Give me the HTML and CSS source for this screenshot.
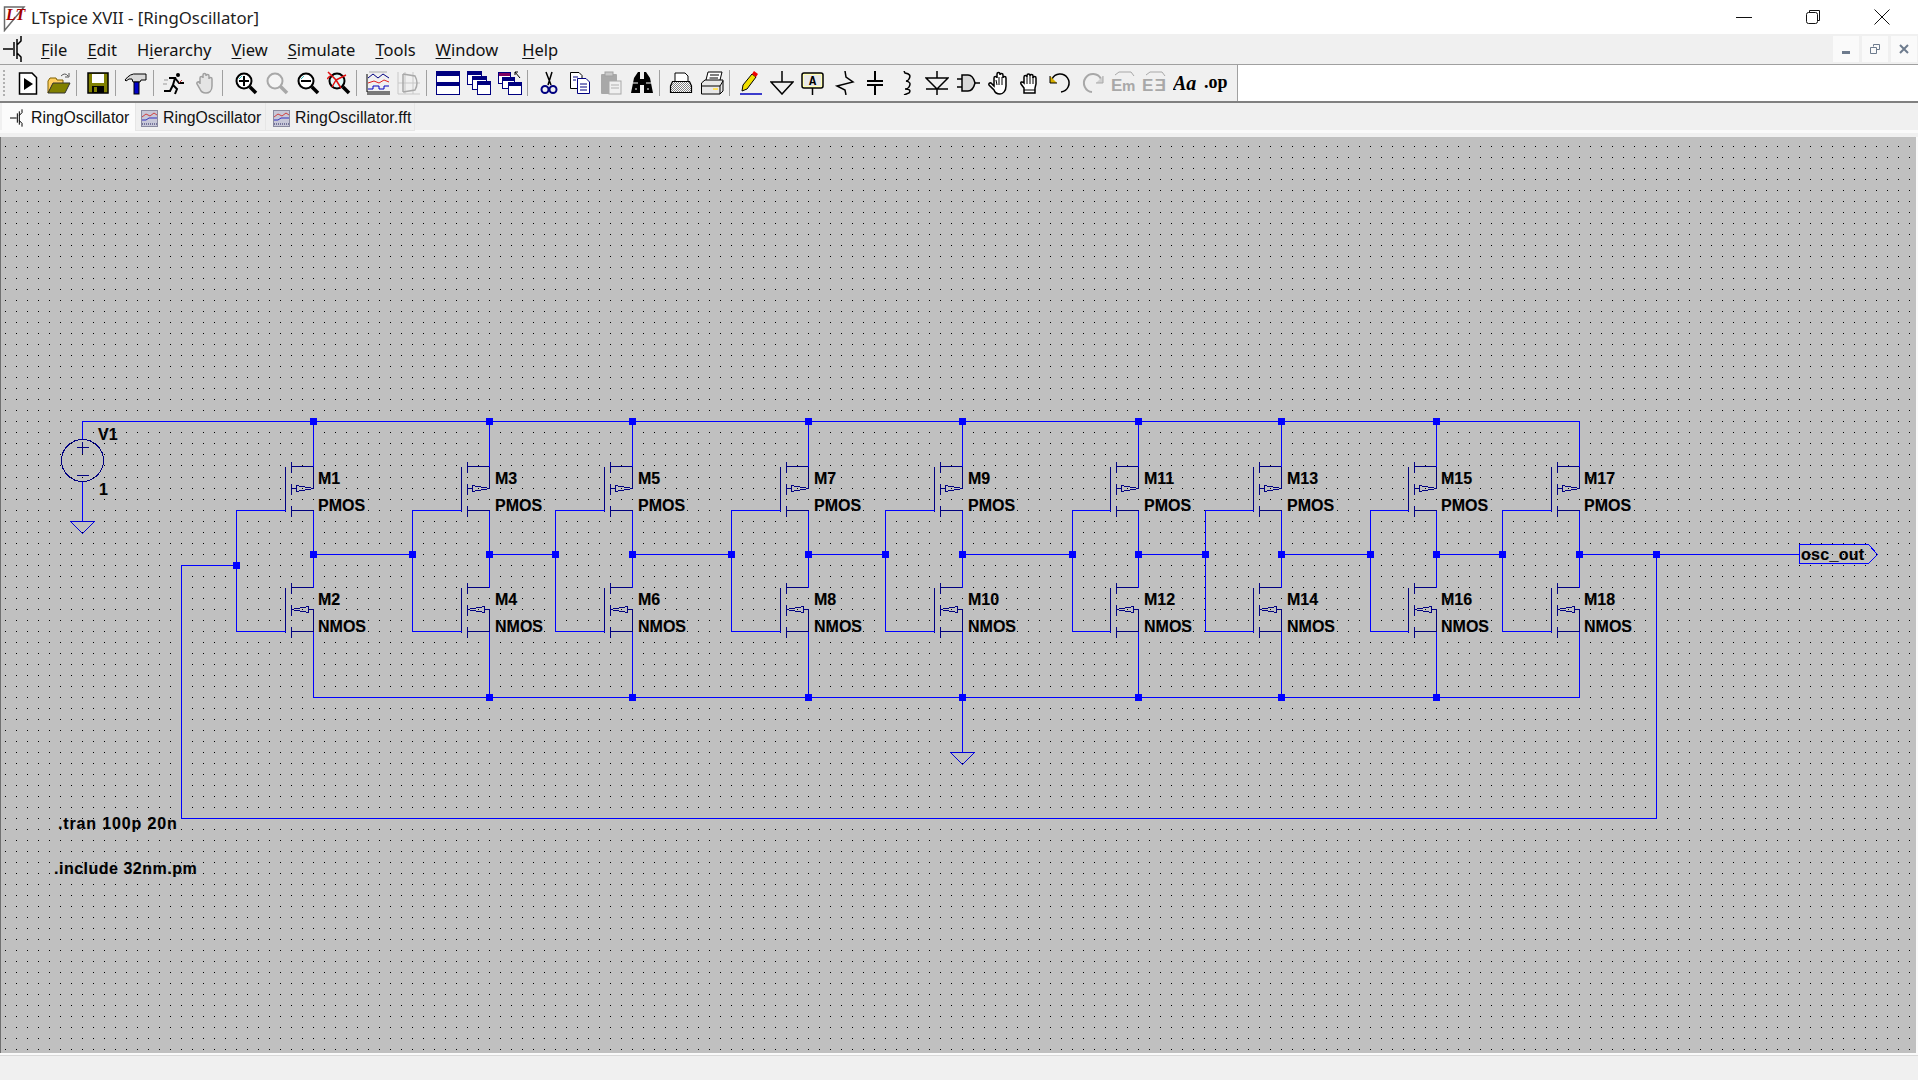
FILE: index.html
```html
<!DOCTYPE html>
<html lang="en">
<head>
    <meta charset="UTF-8">
    <title>LTspice XVII - [RingOscillator]</title>
    <link rel="stylesheet" href="styles.css">
</head>
<body>
    <svg class="defs" width="0" height="0">
        <defs>
            <g id="fet-mark">
                <path d="M0 13H10M11 6V20M14 3V23M14 9L18 5V0M14 17L18 21V26" fill="none" stroke="#000" stroke-width="1.5"/>
            </g>
            <g id="plot-mini">
                <rect x="0.5" y="0.5" width="16" height="16" fill="#c8c8d8" stroke="#8a8aa0"/>
                <path d="M1 7L5 4L9 6L13 3L16 5" fill="none" stroke="#d04040"/>
                <path d="M1 10H5L8 8H16" fill="none" stroke="#3030c0"/>
                <path d="M1 14H16" stroke="#202060" stroke-dasharray="1 1"/>
            </g>
            <g id="lens">
                <path d="M15 15L22 22" stroke="#000" stroke-width="3.5"/>
                <path d="M14 14L16 16" stroke="#808080" stroke-width="2"/>
            </g>
            <pattern id="dither" width="2" height="2" patternUnits="userSpaceOnUse">
                <rect width="2" height="2" fill="#fff"/>
                <rect width="1" height="1" fill="#808080"/>
                <rect x="1" y="1" width="1" height="1" fill="#808080"/>
            </pattern>
        </defs>
    </svg>

    <header class="titlebar">
        <svg class="logo" width="24" height="30" viewBox="0 0 24 30">
            <path d="M2.5 5V28.5L22 5Z" fill="#fff" stroke="#6a6a6a" stroke-width="1.5"/>
            <text x="4" y="18" class="logo-text">LT</text>
        </svg>
        <span class="title">LTspice XVII - [RingOscillator]</span>
        <div class="winbtns">
            <span class="winbtn"><svg width="16" height="16"><path d="M0 8.5H16" stroke="#111"/></svg></span>
            <span class="winbtn"><svg width="16" height="16"><path d="M4.5 3V1.5H14.5V11.5H13" fill="none" stroke="#111"/><rect x="1.5" y="3.5" width="11" height="11" rx="2" fill="#fff" stroke="#111"/></svg></span>
            <span class="winbtn"><svg width="16" height="16"><path d="M0.5 0.5L15.5 15.5M15.5 0.5L0.5 15.5" stroke="#111"/></svg></span>
        </div>
    </header>

    <nav class="menubar">
        <svg class="menu-icon" width="20" height="26" viewBox="0 0 20 26"><use href="#fet-mark"/></svg>
        <a class="menu-item"><u>F</u>ile</a>
        <a class="menu-item"><u>E</u>dit</a>
        <a class="menu-item">H<u>i</u>erarchy</a>
        <a class="menu-item"><u>V</u>iew</a>
        <a class="menu-item"><u>S</u>imulate</a>
        <a class="menu-item"><u>T</u>ools</a>
        <a class="menu-item"><u>W</u>indow</a>
        <a class="menu-item help"><u>H</u>elp</a>
        <div class="mdibtns">
            <span class="mdibtn"><svg width="10" height="10"><rect x="1" y="7" width="8" height="3" fill="#6d7b8d"/></svg></span>
            <span class="mdibtn"><svg width="10" height="10"><path d="M3.5 2.5V0.5H9.5V5.5H7M0.5 3.5H6.5V9.5H0.5Z" fill="none" stroke="#6d7b8d"/></svg></span>
            <span class="mdibtn"><svg width="10" height="10"><path d="M1 1L9 9M9 1L1 9" stroke="#6d7b8d" stroke-width="2"/></svg></span>
        </div>
    </nav>

    <div class="toolrow">
        <div class="toolbar">
            <span class="grip"></span>
            <span class="tool"><svg viewBox="0 0 24 24"><path d="M3.5 2H16L20.5 6.5V23H3.5Z" fill="#fff" stroke="#000" stroke-width="1.5"/><path d="M8 7L17 13L8 19Z"/></svg></span>
            <span class="tool"><svg viewBox="0 0 24 24"><path d="M1 10L3 7H9L10 9H16V13H6L1 22Z" fill="#ffd060" stroke="#806000"/><path d="M1 22L6 12H23L18 22Z" fill="#808000" stroke="#333"/><path d="M14 5Q18 1 21 5M22 2V6H18" fill="none" stroke="#555"/></svg></span>
            <i class="sep"></i>
            <span class="tool"><svg viewBox="0 0 24 24"><rect x="2" y="2" width="20" height="20" fill="#808000" stroke="#000" stroke-width="1.5"/><rect x="6" y="3" width="12" height="9" fill="#fff"/><rect x="6" y="15" width="12" height="7"/><rect x="8" y="16" width="3" height="5" fill="#808000"/></svg></span>
            <i class="sep tight"></i>
            <span class="tool"><svg viewBox="0 0 24 24"><path d="M1 9Q6 2 13 3H22V9H17L16 11H9L8 8Q5 7 2 10Z" fill="#d8d8d8" stroke="#000"/><rect x="10" y="11" width="5" height="12" fill="#0000c8" stroke="#000"/></svg></span>
            <i class="sep tight"></i>
            <span class="tool"><svg viewBox="0 0 24 24"><path d="M2 20H8L11 14L15 18L13 23M11 14L13 7L7 7M13 7L17 12H22" fill="none" stroke="#000" stroke-width="2"/><circle cx="16" cy="4" r="2"/><path d="M2 9H6M1 13H5" stroke="#999"/><path d="M17 12L20 9" stroke="#c03030"/></svg></span>
            <span class="tool"><svg viewBox="0 0 24 24"><path d="M7 13V7a1.5 1.5 0 0 1 3 0V4a1.5 1.5 0 0 1 3 0V5a1.5 1.5 0 0 1 3 0v3a1.5 1.5 0 0 1 3 0v7c0 5-3 7-6 7s-5-1-6-4l-3-5c-1-2 2-3 3-1z" fill="#e4e4e4" stroke="#a0a0a0" stroke-width="1.5"/></svg></span>
            <i class="sep loose"></i>
            <span class="tool"><svg viewBox="0 0 24 24"><use href="#lens"/><circle cx="10" cy="10" r="7.5" fill="#fff" stroke="#000" stroke-width="2"/><path d="M10 5V15M5 10H15" stroke="#000" stroke-width="2"/><path d="M5 8L8 5" stroke="#30c0c0"/></svg></span>
            <span class="tool"><svg viewBox="0 0 24 24"><path d="M15 15L22 22" stroke="#a8a8a8" stroke-width="3.5"/><circle cx="10" cy="10" r="7.5" fill="#f4f4f4" stroke="#a8a8a8" stroke-width="2"/></svg></span>
            <span class="tool"><svg viewBox="0 0 24 24"><use href="#lens"/><circle cx="10" cy="10" r="7.5" fill="#fff" stroke="#000" stroke-width="2"/><path d="M5 10H15" stroke="#000" stroke-width="2"/><path d="M5 8L8 5" stroke="#30c0c0"/></svg></span>
            <span class="tool"><svg viewBox="0 0 24 24"><use href="#lens"/><circle cx="10" cy="10" r="7.5" fill="#e0f8f8" stroke="#000" stroke-width="2"/><path d="M1 1L9 9L5 16M9 9L19 4M9 9L14 17M3 5L0 8" fill="none" stroke="#e01010" stroke-width="1.5"/></svg></span>
            <i class="sep"></i>
            <span class="tool"><svg viewBox="0 0 24 24"><path d="M1 3V21H24M1 23H24" fill="none" stroke="#000"/><path d="M3 1H21" stroke="#aaa"/><path d="M2 7L7 3L12 7L17 3L23 7" fill="none" stroke="#000080"/><path d="M2 12L8 10L13 12L18 9L23 11" fill="none" stroke="#e02020"/><path d="M2 18H7V15H13V18H18V15H23" fill="none" stroke="#0000c0"/></svg></span>
            <span class="tool"><svg viewBox="0 0 24 24"><path d="M1 1V23H23M1 12H23M8 1V23M16 1V23" fill="none" stroke="#c8c8c8"/><path d="M6 3V21M6 3L18 5Q22 12 18 19L6 21" fill="none" stroke="#a8a8a8" stroke-width="1.5"/></svg></span>
            <i class="sep"></i>
            <span class="tool"><svg viewBox="0 0 24 24"><rect x="0.5" y="0.5" width="23" height="23" fill="#fff" stroke="#000080"/><rect x="1" y="1" width="22" height="4" fill="#000080"/><rect x="1" y="11" width="22" height="4" fill="#000080"/></svg></span>
            <span class="tool"><svg viewBox="0 0 24 24"><rect x="0.5" y="0.5" width="14" height="13" fill="#fff" stroke="#000080"/><rect x="1" y="1" width="13" height="3" fill="#000080"/><rect x="5.5" y="5.5" width="14" height="13" fill="#fff" stroke="#000080"/><rect x="6" y="6" width="13" height="3" fill="#000080"/><rect x="10.5" y="10.5" width="13" height="13" fill="#fff" stroke="#000080"/><rect x="11" y="11" width="12" height="3" fill="#000080"/></svg></span>
            <span class="tool"><svg viewBox="0 0 24 24"><rect x="0.5" y="1.5" width="12" height="11" fill="#fff" stroke="#000080"/><rect x="1" y="2" width="11" height="3" fill="#800060"/><rect x="4.5" y="6.5" width="12" height="11" fill="#fff" stroke="#000080"/><rect x="5" y="7" width="11" height="3" fill="#000080"/><rect x="10.5" y="11.5" width="13" height="12" fill="#fff" stroke="#000080"/><rect x="11" y="12" width="12" height="3" fill="#000080"/><path d="M20 1L17 1L17 4M17 1L22 7" fill="none" stroke="#000"/></svg></span>
            <i class="sep"></i>
            <span class="tool"><svg viewBox="0 0 24 24"><path d="M9 1L14 14M15 1L11 14" stroke="#000" stroke-width="1.5"/><circle cx="8" cy="18.5" r="3.5" fill="none" stroke="#000080" stroke-width="2"/><circle cx="16" cy="18.5" r="3.5" fill="none" stroke="#000080" stroke-width="2"/></svg></span>
            <span class="tool"><svg viewBox="0 0 24 24"><path d="M2.5 1.5H11L14 4.5V17.5H2.5Z" fill="#fff" stroke="#000"/><path d="M9.5 7.5H18L21.5 11V22.5H9.5Z" fill="#fff" stroke="#000080"/><path d="M5 6H10M5 9H8M12 13H19M12 16H19M12 19H19" stroke="#000080"/></svg></span>
            <span class="tool"><svg viewBox="0 0 24 24"><rect x="2" y="3" width="16" height="20" rx="1" fill="#a8a8a8"/><rect x="6" y="1" width="8" height="4" fill="#c8c8c8" stroke="#a0a0a0"/><rect x="10" y="10" width="12" height="13" fill="#f0f0f0" stroke="#a8a8a8"/><path d="M12 14H20M12 17H20" stroke="#b0b0b0"/></svg></span>
            <span class="tool"><svg viewBox="0 0 24 24"><path d="M4 7L8 1H10V8H14V1H16L20 7L23 22H14V14H10V22H1Z"/><path d="M3 12H8M16 12H21M5 18H7M17 18H19" stroke="#fff"/></svg></span>
            <i class="sep"></i>
            <span class="tool"><svg viewBox="0 0 24 24"><path d="M6 11V2H16L19 5V11" fill="#fff" stroke="#000"/><path d="M3.5 10.5H20.5L22.5 15V21.5H1.5V15Z" fill="url(#dither)" stroke="#000" stroke-width="1.2"/></svg></span>
            <span class="tool"><svg viewBox="0 0 24 24"><path d="M6 9L8 1H22L20 9" fill="#fff" stroke="#000"/><path d="M10 4H19M9.5 7H18" stroke="#000"/><path d="M1.5 12L5 9H23V20L20 23H1.5Z" fill="#e8e8e8" stroke="#000"/><path d="M2 15H20V23M20 15L23 10" fill="none" stroke="#000"/><rect x="13" y="17" width="5" height="2" fill="#ffe060"/></svg></span>
            <i class="sep"></i>
            <span class="tool"><svg viewBox="0 0 24 24"><path d="M1 23H23" stroke="#0000c0" stroke-width="1.5"/><path d="M3 20L4 14L13 3L17 6L8 18Z" fill="#f0e000" stroke="#000"/><path d="M13 3L15 0L19 3L17 6Z" fill="#f00000"/></svg></span>
            <span class="tool"><svg viewBox="0 0 24 24"><path d="M12 0V11M1 11H23L12 23Z" fill="none" stroke="#000" stroke-width="1.5"/></svg></span>
            <span class="tool"><svg viewBox="0 0 24 24"><rect x="1" y="2" width="21" height="15" rx="2" fill="#ffffb0" stroke="#000" stroke-width="1.5"/><rect x="3" y="4" width="17" height="11" fill="#e8e8e8"/><text x="11.5" y="14" class="tool-letter">A</text><path d="M11.5 17V24" stroke="#000" stroke-width="1.5"/></svg></span>
            <span class="tool"><svg viewBox="0 0 24 24"><path d="M13 0L14 6L21 11L5 15L13 19L14 24" fill="none" stroke="#000" stroke-width="1.5"/></svg></span>
            <span class="tool"><svg viewBox="0 0 24 24"><path d="M12 0V10M4 10H20M4 14H20M12 14V24" fill="none" stroke="#000" stroke-width="2"/></svg></span>
            <span class="tool"><svg viewBox="0 0 24 24"><path d="M10 0L11 2Q18 3 15 8Q14 10 12 10Q18 11 15 16Q14 18 11 18Q18 18 15 22L10 24" fill="none" stroke="#000" stroke-width="1.5"/></svg></span>
            <span class="tool"><svg viewBox="0 0 24 24"><path d="M12 0V7M1 7H23L12 18ZM1 18H23M12 18V24" fill="none" stroke="#000" stroke-width="1.5"/></svg></span>
            <span class="tool"><svg viewBox="0 0 24 24"><path d="M1 8H6M1 16H6M18 12H24" stroke="#000" stroke-width="1.5"/><path d="M6 4H12Q17 4 19 12Q17 20 12 20H6Z" fill="#d8d8d8" stroke="#000" stroke-width="1.5"/></svg></span>
            <span class="tool"><svg viewBox="0 0 24 24"><path d="M7 15V7a1.5 1.5 0 0 1 3 0V3a1.5 1.5 0 0 1 3 0V4a1.5 1.5 0 0 1 3 0v3a1.5 1.5 0 0 1 3 0v8c0 5-3 8-6 8s-5-1-6-4l-5-5c-1-2 2-3 3-1z" fill="#fff" stroke="#000" stroke-width="1.5"/><path d="M9 9L10 14M12 6V14M15 6V14" stroke="#000"/></svg></span>
            <span class="tool"><svg viewBox="0 0 24 24"><path d="M6 22V17L3 13c-1-2 1-3 3-1V6a1.5 1.5 0 0 1 3 0V4.5a1.5 1.5 0 0 1 3 0V5a1.5 1.5 0 0 1 3 0V7a1.5 1.5 0 0 1 3 0v6l-1 4v5z" fill="#fff" stroke="#000" stroke-width="1.5"/><path d="M9 6V13M12 5V13M15 6V13M6 19H17" stroke="#000"/></svg></span>
            <span class="tool"><svg viewBox="0 0 24 24"><path d="M3 8A9 9 0 1 1 12 21" fill="none" stroke="#000" stroke-width="1.5"/><path d="M1 5V12H8" fill="#d8b000" stroke="#000"/></svg></span>
            <span class="tool"><svg viewBox="0 0 24 24"><path d="M21 8A9 9 0 1 0 12 21" fill="none" stroke="#a8a8a8" stroke-width="2"/><path d="M23 5V12H16" fill="#d0d0d0" stroke="#a8a8a8"/></svg></span>
            <span class="tool"><svg viewBox="0 0 24 24"><text x="0" y="20" class="tool-gray">E</text><text x="11" y="20" class="tool-gray small">m</text><path d="M4 4L8 1H20L23 5" fill="none" stroke="#a8a8a8"/></svg></span>
            <span class="tool"><svg viewBox="0 0 24 24"><text x="0" y="20" class="tool-gray">E</text><text x="-24" y="20" transform="scale(-1 1)" class="tool-gray">E</text><path d="M4 4L8 1H20L23 5" fill="none" stroke="#a8a8a8"/></svg></span>
            <span class="tool"><svg viewBox="0 0 24 24"><text x="0" y="19" class="tool-aa">Aa</text></svg></span>
            <span class="tool"><svg viewBox="0 0 24 24"><text x="0" y="17" class="tool-op">.op</text></svg></span>
        </div>
        <div class="toolrest"></div>
    </div>

    <div class="tabs">
        <div class="tab active"><svg width="16" height="18" viewBox="0 0 24 26"><use href="#fet-mark" x="3"/></svg>RingOscillator</div>
        <div class="tab second"><svg width="17" height="17"><use href="#plot-mini"/></svg>RingOscillator</div>
        <div class="tab third"><svg width="17" height="17"><use href="#plot-mini"/></svg>RingOscillator.fft</div>
    </div>

    <main class="sheet">
        <svg class="schematic" width="1915" height="916" viewBox="1 137 1915 916">
            <defs>
                <g id="cell">
                    <path class="sym" d="M-28 466V511M-22 461V472M-22 483V494M-22 505V516M-22 466H0V488M-22 510H0M-22 488H-17M-17 485V491L0 488Z"/>
                    <path class="sym" d="M-28 587V632M-22 582V593M-22 604V615M-22 626V637M-22 587H0M-22 631H0M0 609V631M-22 609L-5 606V612ZM-5 609H0"/>
                    <path class="wire" d="M0 510V587M0 631V697"/>
                </g>
                <rect id="j" x="-3" y="-3" width="7" height="7" fill="#0000ff"/>
            </defs>

            <path id="dots" fill="#000"></path>

            <g transform="translate(.5 .5)">
                <use href="#cell" x="313"/>
                <use href="#cell" x="489"/>
                <use href="#cell" x="632"/>
                <use href="#cell" x="808"/>
                <use href="#cell" x="962"/>
                <use href="#cell" x="1138"/>
                <use href="#cell" x="1281"/>
                <use href="#cell" x="1436"/>
                <use href="#cell" x="1579"/>

                <!-- supply rails and feeds -->
                <path class="wire" d="M82 439V421H1579V466M313 421V466M489 421V466M632 421V466M808 421V466M962 421V466M1138 421V466M1281 421V466M1436 421V466"/>
                <path class="wire" d="M313 697H1579M962 697V752M82 481V521"/>
                <!-- gates -->
                <path class="wire" d="M285 510H236V631H285M461 510H412V631H461M604 510H555V631H604M780 510H731V631H780M934 510H885V631H934M1110 510H1072V631H1110M1253 510H1205V631H1253M1408 510H1370V631H1408M1551 510H1502V631H1551"/>
                <!-- chain -->
                <path class="wire" d="M313 554H412M489 554H555M632 554H731M808 554H885M962 554H1072M1138 554H1205M1281 554H1370M1436 554H1502M1579 554H1799"/>
                <path class="wire" d="M236 565H181V818H1656V554"/>

                <!-- V1 and grounds -->
                <circle class="sym" cx="82" cy="460" r="21"/>
                <path class="sym" d="M76 447H88M82 441V453M76 475H88"/>
                <path class="gnd" d="M70 521H94L82 533Z"/>
                <path class="gnd" d="M950 752H974L962 764Z"/>
                <path class="wire" d="M1799 544H1868L1877 554L1868 563H1799Z"/>
            </g>

            <use href="#j" x="313" y="421"/><use href="#j" x="489" y="421"/><use href="#j" x="632" y="421"/><use href="#j" x="808" y="421"/><use href="#j" x="962" y="421"/><use href="#j" x="1138" y="421"/><use href="#j" x="1281" y="421"/><use href="#j" x="1436" y="421"/>
            <use href="#j" x="489" y="697"/><use href="#j" x="632" y="697"/><use href="#j" x="808" y="697"/><use href="#j" x="962" y="697"/><use href="#j" x="1138" y="697"/><use href="#j" x="1281" y="697"/><use href="#j" x="1436" y="697"/>
            <use href="#j" x="313" y="554"/><use href="#j" x="412" y="554"/><use href="#j" x="489" y="554"/><use href="#j" x="555" y="554"/><use href="#j" x="632" y="554"/><use href="#j" x="731" y="554"/><use href="#j" x="808" y="554"/><use href="#j" x="885" y="554"/><use href="#j" x="962" y="554"/><use href="#j" x="1072" y="554"/><use href="#j" x="1138" y="554"/><use href="#j" x="1205" y="554"/><use href="#j" x="1281" y="554"/><use href="#j" x="1370" y="554"/><use href="#j" x="1436" y="554"/><use href="#j" x="1502" y="554"/><use href="#j" x="1579" y="554"/><use href="#j" x="1656" y="554"/>
            <use href="#j" x="236" y="565"/>

            <g class="labels">
                <text x="98" y="440">V1</text>
                <text x="99" y="495">1</text>
                <text x="1801" y="560" class="osc">osc_out</text>
                <text x="58" y="829" class="tran">.tran 100p 20n</text>
                <text x="54" y="874" class="wide">.include 32nm.pm</text>

                <text x="318" y="484">M1</text><text x="318" y="511">PMOS</text><text x="318" y="605">M2</text><text x="318" y="632">NMOS</text>
                <text x="495" y="484">M3</text><text x="495" y="511">PMOS</text><text x="495" y="605">M4</text><text x="495" y="632">NMOS</text>
                <text x="638" y="484">M5</text><text x="638" y="511">PMOS</text><text x="638" y="605">M6</text><text x="638" y="632">NMOS</text>
                <text x="814" y="484">M7</text><text x="814" y="511">PMOS</text><text x="814" y="605">M8</text><text x="814" y="632">NMOS</text>
                <text x="968" y="484">M9</text><text x="968" y="511">PMOS</text><text x="968" y="605">M10</text><text x="968" y="632">NMOS</text>
                <text x="1144" y="484">M11</text><text x="1144" y="511">PMOS</text><text x="1144" y="605">M12</text><text x="1144" y="632">NMOS</text>
                <text x="1287" y="484">M13</text><text x="1287" y="511">PMOS</text><text x="1287" y="605">M14</text><text x="1287" y="632">NMOS</text>
                <text x="1441" y="484">M15</text><text x="1441" y="511">PMOS</text><text x="1441" y="605">M16</text><text x="1441" y="632">NMOS</text>
                <text x="1584" y="484">M17</text><text x="1584" y="511">PMOS</text><text x="1584" y="605">M18</text><text x="1584" y="632">NMOS</text>
            </g>
        </svg>
    </main>

    <footer class="statusbar"></footer>

    <script>
        // grid dots: pitch is 11px but slips one pixel part way across the sheet
        let d = '';
        for (let j = 0; j <= 82; j++) {
            const y = 146 + j * 11 + (j >= 30 ? 1 : 0);
            for (let i = 0; i <= 173; i++) {
                const x = 5 + i * 11 + (i >= 120 ? 1 : 0);
                d += 'M' + x + ' ' + y + 'h1v1h-1z';
            }
        }
        document.getElementById('dots').setAttribute('d', d);
    </script>
</body>
</html>
```

FILE: styles.css
```css
html, body {
    margin: 0;
    padding: 0;
}
body {
    width: 1918px;
    height: 1080px;
    overflow: hidden;
    display: flex;
    flex-direction: column;
    background: #f0f0f0;
    font-family: "Noto Sans", "Liberation Sans", sans-serif;
    color: #000;
}
.defs {
    position: absolute;
}

/* title bar */
.titlebar {
    height: 34px;
    background: #fff;
    display: flex;
    align-items: center;
}
.logo {
    margin-left: 2px;
}
.logo-text {
    font: italic bold 16px "Liberation Serif", serif;
    fill: #a80000;
}
.title {
    margin-left: 5px;
    font-size: 16.8px;
    color: #222;
}
.winbtns {
    margin-left: auto;
    margin-right: 2px;
    display: flex;
}
.winbtn {
    width: 69px;
    height: 34px;
    display: flex;
    align-items: center;
    justify-content: center;
}

/* menu */
.menubar {
    height: 30px;
    border-bottom: 1px solid #a0a0a0;
    display: flex;
    align-items: center;
    gap: 20px;
    font-size: 16.5px;
    color: #111;
}
.menu-icon {
    margin-left: 3px;
    margin-right: -2px;
}
.menu-item u {
    text-underline-offset: 2px;
}
.menu-item.help {
    margin-left: 4px;
}
.mdibtns {
    margin-left: auto;
    margin-right: 1px;
    display: flex;
    gap: 3px;
}
.mdibtn {
    width: 26px;
    height: 26px;
    background: #fafafa;
    display: flex;
    align-items: center;
    justify-content: center;
}

/* toolbar */
.toolrow {
    height: 36px;
    display: flex;
    border-bottom: 2px solid #808080;
}
.toolbar {
    width: 1238px;
    box-sizing: border-box;
    padding-left: 3px;
    display: flex;
    align-items: center;
    border-right: 1px solid #a0a0a0;
}
.toolrest {
    flex: 1;
    background: #fff;
}
.grip {
    width: 2px;
    height: 26px;
    margin-right: 7px;
    background: repeating-linear-gradient(#b0b0b0 0 2px, transparent 2px 4px);
}
.tool {
    width: 31px;
    height: 24px;
    display: flex;
    justify-content: center;
}
.tool svg {
    width: 24px;
    height: 24px;
}
.sep {
    width: 1px;
    height: 26px;
    background: #a0a0a0;
    margin: 0 5px 0 2px;
}
.sep.tight {
    margin-right: 4px;
}
.sep.loose {
    margin-right: 7px;
}
.tool-letter {
    font: bold 12px "Liberation Mono", monospace;
    text-anchor: middle;
}
.tool-gray {
    font: bold 17px "Liberation Sans", sans-serif;
    fill: #a8a8a8;
}
.tool-gray.small {
    font-size: 15px;
}
.tool-aa {
    font: italic bold 20px "Liberation Serif", serif;
}
.tool-op {
    font: bold 18px "Liberation Serif", serif;
}

/* document tabs */
.tabs {
    height: 34px;
    box-sizing: border-box;
    padding-left: 2px;
    display: flex;
    align-items: flex-start;
    font-family: "Liberation Sans", sans-serif;
    font-size: 15.8px;
    color: #111;
    background: linear-gradient(#f0f0f0 0 27px, #fafafa 27px 30px, #f0f0f0 30px);
}
.tab {
    height: 28px;
    box-sizing: border-box;
    display: flex;
    align-items: center;
    gap: 5px;
    padding-top: 3px;
    border-right: 1px solid #e6e6e6;
    border-bottom: 1px solid #e6e6e6;
}
.tab.active {
    width: 134px;
    padding-left: 6px;
    padding-top: 1px;
    gap: 7px;
    background: #fbfbfb;
    border-bottom: none;
}
.tab.second {
    width: 130px;
    padding-left: 5px;
}
.tab.third {
    width: 149px;
    padding-left: 7px;
    letter-spacing: 0.1px;
}

/* schematic */
.sheet {
    height: 916px;
    background: #c0c0c0;
    border-left: 1px solid #707070;
    border-right: 2px solid #fafafa;
    display: flex;
}
.schematic {
    display: block;
    shape-rendering: crispEdges;
}
.wire {
    fill: none;
    stroke: #0000ff;
}
.sym {
    fill: none;
    stroke: #000080;
}
.gnd {
    fill: none;
    stroke: #0000d8;
}
.labels text {
    font: bold 16px "Liberation Sans", sans-serif;
    fill: #000;
    stroke: #000;
    stroke-width: 0.15px;
}
.labels .tran {
    letter-spacing: 0.85px;
}
.labels .wide {
    letter-spacing: 0.5px;
}
.labels .osc {
    letter-spacing: 0.3px;
}

/* status bar */
.statusbar {
    flex: 1;
    border-top: 2px solid #fafafa;
    box-shadow: inset 0 1px 0 #d8d8d8;
}
```
